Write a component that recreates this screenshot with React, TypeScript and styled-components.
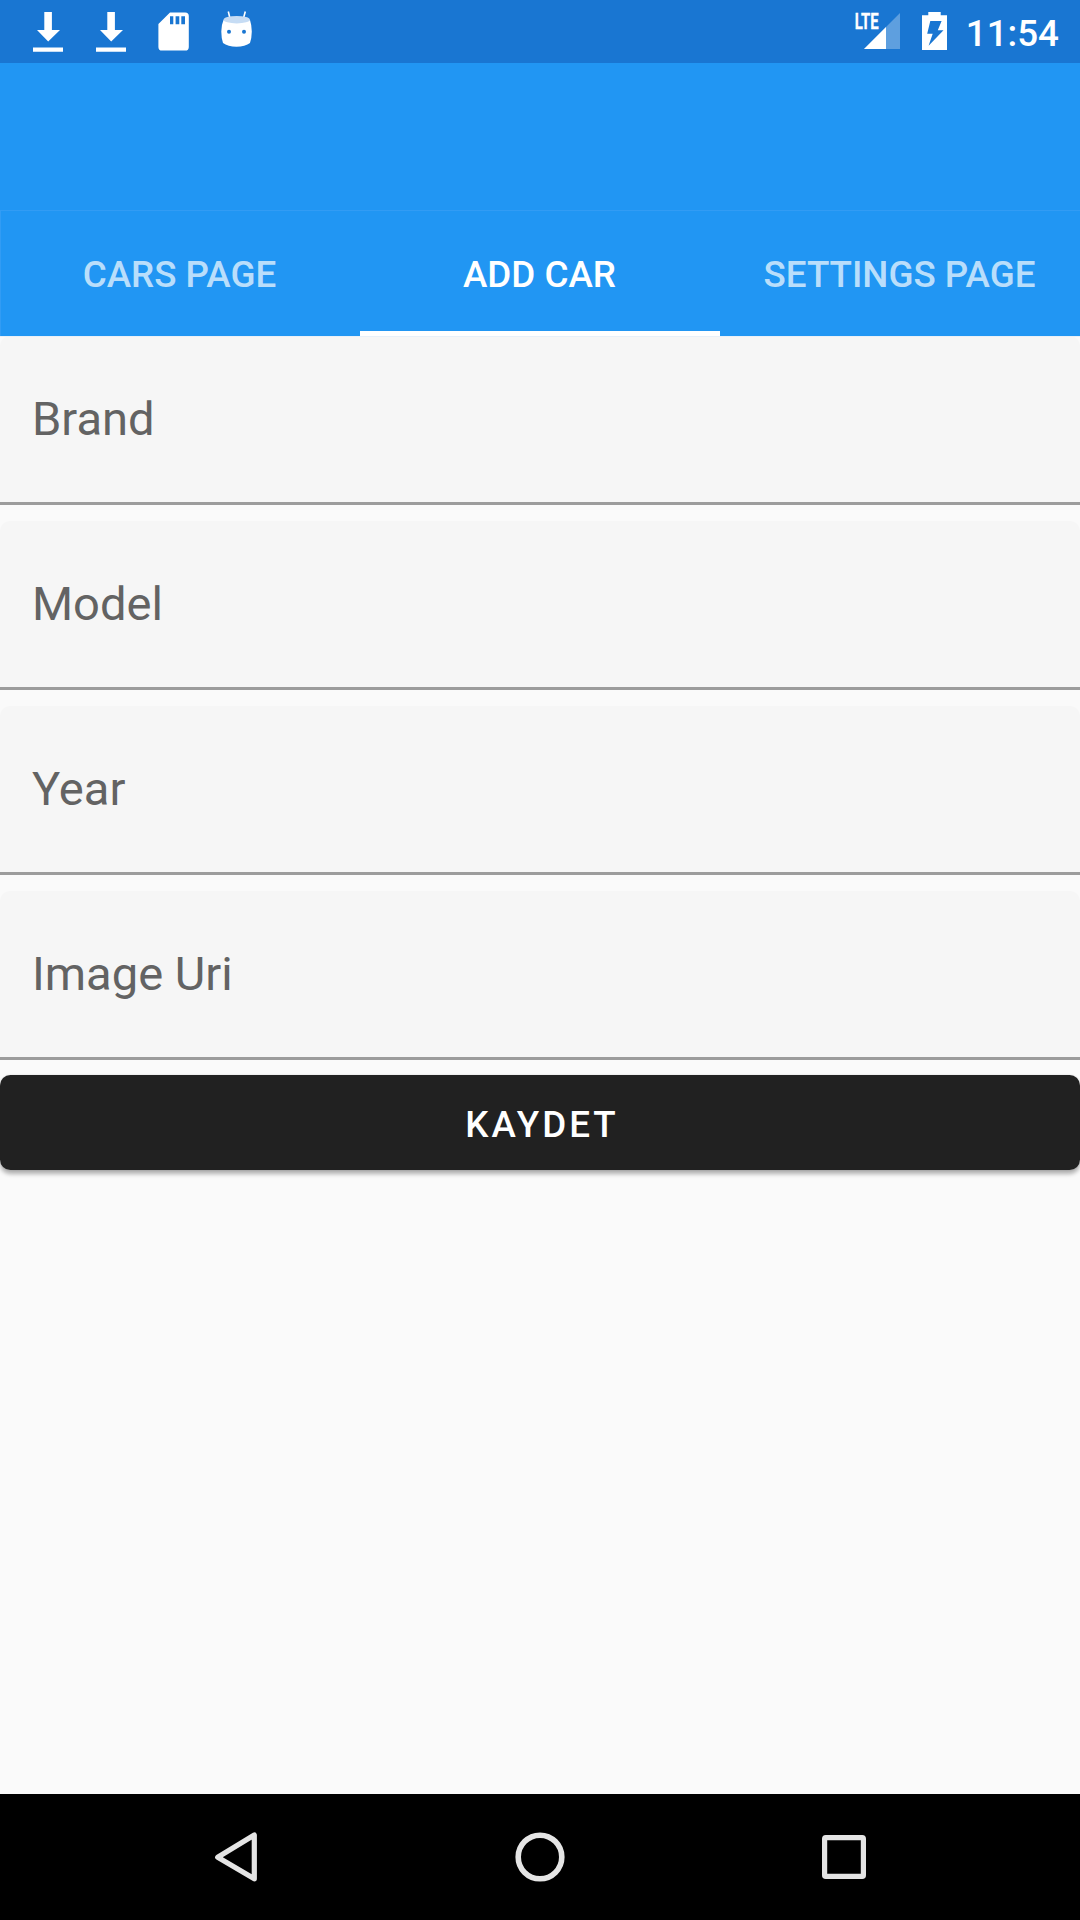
import React, { useState } from "react";
import styled, { createGlobalStyle } from "styled-components";

const GlobalStyle = createGlobalStyle`
  * { box-sizing: border-box; }
  body { margin: 0; background: #fafafa; font-family: Roboto, "Noto Sans", sans-serif; }
`;

const Screen = styled.div`
  display: flex;
  flex-direction: column;
  width: 1080px;
  height: 1920px;
  background: #fafafa;
  overflow: hidden;
`;

const StatusBar = styled.div`
  display: flex;
  justify-content: space-between;
  height: 63px;
  flex: none;
  padding: 0 21px 0 16px;
  background: #1976d2;
`;

const IconGroup = styled.div`
  display: flex;
`;

const StatusIcon = styled.svg<{ $width?: number }>`
  display: block;
  width: ${(p) => p.$width ?? 63}px;
  height: 63px;
  fill: #fff;
`;

const Clock = styled.span`
  width: 94px;
  height: 63px;
  line-height: 68px;
  font-size: 36.75px;
  font-weight: 500;
  color: #fff;
  text-align: right;
  white-space: nowrap;
`;

const Header = styled.header`
  display: flex;
  flex-direction: column;
  flex: none;
  background: #2196f3;
  z-index: 1;
  box-shadow: 0 1px 0 #e8f0f8;
`;

const Toolbar = styled.div`
  height: 147px;
`;

const TabBar = styled.nav`
  display: grid;
  grid-template-columns: repeat(3, 1fr);
  height: 126px;
  box-shadow: inset 1px 1px 0 #329cf4;
`;

const Tab = styled.button<{ $active: boolean }>`
  border: 0;
  border-bottom: 5px solid ${(p) => (p.$active ? "#fff" : "transparent")};
  padding: 8px 1px 0 0;
  background: none;
  font: 500 36.75px Roboto, sans-serif;
  color: ${(p) => (p.$active ? "#fff" : "rgba(255, 255, 255, 0.7)")};
  white-space: nowrap;
`;

const Form = styled.form`
  display: flex;
  flex-direction: column;
  flex: 1;
`;

const Field = styled.label`
  display: flex;
  align-items: center;
  height: 169px;
  margin-bottom: 16px;
  padding: 0 32px 0;
  border-radius: 10.5px 10.5px 0 0;
  background: linear-gradient(#9c9c9c, #9c9c9c) bottom / 100% 3px no-repeat #f6f6f6;

  &:last-of-type { margin-bottom: 15px; }
`;

const Input = styled.input`
  width: 100%;
  height: 100%;
  border: 0;
  outline: 0;
  padding: 0 0 4px;
  background: none;
  font: 400 47.1px Roboto, sans-serif;
  color: #212121;

  &::placeholder { color: #636363; opacity: 1; }
`;

const SaveButton = styled.button`
  height: 95px;
  border: 0;
  border-radius: 10.5px;
  padding: 3px 0 0 4px;
  background: #212121;
  box-shadow: 0 4px 4px rgba(0, 0, 0, 0.3), 0 0 2px rgba(0, 0, 0, 0.15);
  font: 500 36.75px Roboto, sans-serif;
  letter-spacing: 3px;
  color: #fff;
`;

const NavBar = styled.footer`
  display: flex;
  justify-content: space-between;
  align-items: center;
  height: 126px;
  flex: none;
  padding: 0 206px;
  background: #000;
`;

const NavIcon = styled.svg`
  width: 60px;
  height: 60px;
  fill: none;
  stroke: #e5e5e5;
  stroke-linejoin: round;
`;

const DownloadIcon = () => (
  <StatusIcon viewBox="0 0 63 63">
    <path d="M28.3 12h7.6v18H44L32.2 41.5 21 30h7.3zM17 47.4h30v4.4H17z" />
  </StatusIcon>
);

const SdCardIcon = () => (
  <StatusIcon viewBox="0 0 63 63">
    <path
      fillRule="evenodd"
      d="M28 12.5h15.2a3.6 3.6 0 0 1 3.6 3.6v30.8a3.6 3.6 0 0 1-3.6 3.6H20a3.6 3.6 0 0 1-3.6-3.6V24zM28 16.3v7.9h3.3v-7.9zM33.6 16.3v7.9h3.7v-7.9zM39.3 16.3v7.9H43v-7.9z"
    />
  </StatusIcon>
);

const AndroidIcon = () => (
  <StatusIcon viewBox="0 0 63 63">
    <path d="M23.3 11.5 25 18.5M40.3 11.5 38.4 18.5" stroke="#fff" strokeWidth="1.6" />
    <path d="M18.5 20Q31.5 25 45 20Q46.7 25 46.8 31.5Q46.7 38 45 43C42 45.3 37 46.7 31.5 46.7S21 45.3 18 43Q16.3 38 16.3 31.5Q16.3 25 18.5 20z" />
    <ellipse cx="31.7" cy="19.7" rx="13.2" ry="3.7" fill="#c6dcf4" />
    <circle cx="24" cy="31.7" r="2" fill="#1976d2" />
    <circle cx="39" cy="31.7" r="2" fill="#1976d2" />
  </StatusIcon>
);

const SignalIcon = () => (
  <StatusIcon viewBox="852 0 60 63" $width={60}>
    <path d="M900 13V49H864z" fillOpacity="0.3" />
    <path d="M886 27V49H864z" />
    <text
      x="854.7"
      y="29"
      fontFamily="Roboto"
      fontWeight="700"
      fontSize="22"
      textLength="24"
      lengthAdjust="spacingAndGlyphs"
      stroke="#fff"
      strokeWidth="0.3"
    >
      LTE
    </text>
  </StatusIcon>
);

const BatteryIcon = () => (
  <StatusIcon viewBox="912 0 53 63" $width={53}>
    <path d="M928.3 12h12.4v3.2H947V50H922V15.2h6.3z" />
    <path d="M930.3 21h11.3l-3.8 9.2h5.7L928.6 45.7l4.1-12h-5.5z" fill="#1976d2" />
  </StatusIcon>
);

const TABS = ["CARS PAGE", "ADD CAR", "SETTINGS PAGE"];
const FIELDS = ["Brand", "Model", "Year", "Image Uri"];

export default function App() {
  const [active, setActive] = useState(1);
  return (
    <Screen>
      <GlobalStyle />
      <StatusBar>
        <IconGroup>
          <DownloadIcon />
          <DownloadIcon />
          <SdCardIcon />
          <AndroidIcon />
        </IconGroup>
        <IconGroup>
          <SignalIcon />
          <BatteryIcon />
          <Clock>11:54</Clock>
        </IconGroup>
      </StatusBar>
      <Header>
        <Toolbar />
        <TabBar>
          {TABS.map((name, i) => (
            <Tab key={name} $active={i === active} onClick={() => setActive(i)}>
              {name}
            </Tab>
          ))}
        </TabBar>
      </Header>
      <Form onSubmit={(e) => e.preventDefault()}>
        {FIELDS.map((name) => (
          <Field key={name}>
            <Input placeholder={name} />
          </Field>
        ))}
        <SaveButton>KAYDET</SaveButton>
      </Form>
      <NavBar>
        <NavIcon viewBox="206 1827 60 60">
          <path d="M217.7 1857.3 254.3 1835V1878.8z" strokeWidth="5.2" />
        </NavIcon>
        <NavIcon viewBox="510 1827 60 60">
          <circle cx="540" cy="1857" r="21.8" strokeWidth="5.6" />
        </NavIcon>
        <NavIcon viewBox="814 1827 60 60">
          <rect x="824.6" y="1837.6" width="38.8" height="38.8" rx="1.2" strokeWidth="5.2" />
        </NavIcon>
      </NavBar>
    </Screen>
  );
}
